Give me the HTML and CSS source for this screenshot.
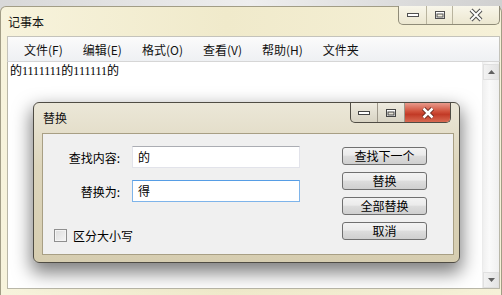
FILE: index.html
```html
<!DOCTYPE html>
<html lang="zh-CN">
<head>
    <meta charset="UTF-8">
    <title>记事本</title>
    <link rel="stylesheet" href="styles.css">
</head>
<body>

    <div class="notepad">
        <div class="title-bar">
            <span class="title">记事本</span>
            <div class="controls">
                <span class="ctl ctl-min">
                    <svg width="14" height="6" viewBox="0 0 14 6"><rect x="1.5" y="1.5" width="11" height="3" fill="#fff" stroke="#505050"/></svg>
                </span>
                <span class="ctl ctl-max">
                    <svg width="12" height="10" viewBox="0 0 12 10"><rect x="1.5" y="1.5" width="9" height="7" fill="#fff" stroke="#505050"/><rect x="3" y="4" width="6" height="3" fill="#f4f1e0" stroke="#505050"/></svg>
                </span>
                <span class="ctl ctl-close">
                    <svg width="16" height="14" viewBox="0 0 16 14"><path d="M3 2 L13 12 M13 2 L3 12" stroke="#505050" stroke-width="4"/><path d="M3 2 L13 12 M13 2 L3 12" stroke="#fff" stroke-width="2"/></svg>
                </span>
            </div>
        </div>

        <div class="menu-bar">
            <span class="menu-item">文件(F)</span>
            <span class="menu-item">编辑(E)</span>
            <span class="menu-item">格式(O)</span>
            <span class="menu-item">查看(V)</span>
            <span class="menu-item">帮助(H)</span>
            <span class="menu-item">文件夹</span>
        </div>

        <div class="editor">
            <div class="text">的1111111的111111的</div>
            <div class="scrollbar">
                <span class="arrow">
                    <svg width="7" height="4" viewBox="0 0 7 4"><path d="M0 4 L3.5 0 L7 4 Z" fill="#606060"/></svg>
                </span>
                <span class="track"></span>
                <span class="arrow">
                    <svg width="7" height="4" viewBox="0 0 7 4"><path d="M0 0 L7 0 L3.5 4 Z" fill="#606060"/></svg>
                </span>
            </div>
        </div>
    </div>

    <!-- replace dialog sits over the notepad window -->
    <div class="dialog">
        <div class="dlg-title-bar">
            <span class="title">替换</span>
            <div class="dlg-controls">
                <span class="ctl dlg-min">
                    <svg width="14" height="6" viewBox="0 0 14 6"><rect x="1.5" y="1.5" width="11" height="3" fill="#fff" stroke="#444"/></svg>
                </span>
                <span class="ctl dlg-max">
                    <svg width="12" height="10" viewBox="0 0 12 10"><rect x="1.5" y="1.5" width="9" height="7" fill="#fff" stroke="#444"/><rect x="3" y="4" width="6" height="3" fill="#e4e0d4" stroke="#444"/></svg>
                </span>
                <span class="ctl dlg-close">
                    <svg width="16" height="14" viewBox="0 0 16 14"><path d="M3.5 2.5 L12.5 11.5 M12.5 2.5 L3.5 11.5" stroke="#6a2a20" stroke-width="4.5"/><path d="M3.5 2.5 L12.5 11.5 M12.5 2.5 L3.5 11.5" stroke="#fff" stroke-width="2.5"/></svg>
                </span>
            </div>
        </div>

        <div class="dlg-body">
            <div class="form">
                <div class="row">
                    <label class="label">查找内容:</label>
                    <div class="input">的</div>
                </div>
                <div class="row">
                    <label class="label">替换为:</label>
                    <div class="input focused">得</div>
                </div>
                <div class="check-row">
                    <span class="checkbox"></span>
                    <span>区分大小写</span>
                </div>
            </div>
            <div class="buttons">
                <span class="btn">查找下一个</span>
                <span class="btn">替换</span>
                <span class="btn">全部替换</span>
                <span class="btn">取消</span>
            </div>
        </div>
    </div>

</body>
</html>
```

FILE: styles.css
```css
* {
    margin: 0;
    padding: 0;
    box-sizing: border-box;
}

body {
    width: 502px;
    height: 295px;
    overflow: hidden;
    position: relative;
    background: linear-gradient(90deg, #d8d8d8, #eeeeee 50%, #d0d0d0);
    font-family: "Noto Sans CJK SC", sans-serif;
    font-size: 12px;
    color: #000;
}

/* notepad window */
.notepad {
    margin-top: 6px;
    height: 289px;
    display: flex;
    flex-direction: column;
    padding: 0 1px 6px 6px;
    background: linear-gradient(90deg, #f7f3dc, #f0eacb 45%, #f6f1d8);
    border: 1px solid #a29d86;
    border-bottom: none;
    border-radius: 6px 6px 0 0;
}

.title-bar {
    height: 29px;
    display: flex;
    justify-content: space-between;
    align-items: flex-start;
}

.title {
    padding-left: 1px;
    line-height: 29px;
    color: #111;
}

.controls {
    display: flex;
    height: 19px;
    margin-top: -1px;
    border: 1px solid #8f8b78;
    border-top: none;
    border-radius: 0 0 5px 5px;
    background: linear-gradient(#f8f6ea, #ece7d0);
    overflow: hidden;
}

.ctl {
    display: flex;
    align-items: center;
    justify-content: center;
}

.ctl-min {
    width: 28px;
    border-right: 1px solid #b9b49e;
}

.ctl-max {
    width: 26px;
    border-right: 1px solid #b9b49e;
}

.ctl-close {
    width: 46px;
}

.menu-bar {
    height: 26px;
    display: flex;
    align-items: center;
    padding-left: 6px;
    background: linear-gradient(#fbfbfb, #eef0f3);
    border: 1px solid #c4c3bb;
    border-bottom: 1px solid #d6d6d6;
}

.menu-item {
    padding: 0 10px;
    color: #111;
}

.editor {
    flex: 1;
    display: flex;
    background: #fff;
    border: 1px solid #b9b7a8;
    border-top: none;
}

.text {
    flex: 1;
    padding: 1px 2px;
    line-height: 16px;
    font-family: "Liberation Serif", "Noto Sans CJK SC", serif;
    font-size: 12px;
}

.scrollbar {
    width: 17px;
    display: flex;
    flex-direction: column;
    padding-top: 2px;
    background: linear-gradient(90deg, #f0f0f0, #fafafa 40%, #f0f0f0);
    border-left: 1px solid #ececec;
}

.arrow {
    height: 16px;
    display: flex;
    align-items: center;
    justify-content: center;
    background: linear-gradient(90deg, #f2f2f2, #e4e4e4);
    border: 1px solid #e0e0e0;
}

.track {
    flex: 1;
}

/* replace dialog */
.dialog {
    position: absolute;
    left: 33px;
    top: 102px;
    width: 427px;
    height: 161px;
    display: flex;
    flex-direction: column;
    padding: 0 5px 7px 8px;
    background: linear-gradient(#ebe7d8, #ddd5bb 40%, #d6cdb0);
    border: 1px solid #4f4c44;
    border-radius: 6px;
    box-shadow: 0 8px 18px 2px rgba(0, 0, 0, 0.5);
}

.dlg-title-bar {
    height: 30px;
    display: flex;
    justify-content: space-between;
    align-items: flex-start;
}

.dlg-controls {
    display: flex;
    height: 20px;
    margin-right: 3px;
    border: 1px solid #4f4c44;
    border-top: none;
    border-radius: 0 0 5px 5px;
    overflow: hidden;
    background: linear-gradient(#eeebe0, #d8d3c3);
}

.dlg-min {
    width: 27px;
    border-right: 1px solid #9d978a;
}

.dlg-max {
    width: 27px;
    border-right: 1px solid #9d978a;
}

.dlg-close {
    width: 45px;
    background: linear-gradient(#e89a8c, #d0503a 45%, #c23a26 60%, #d86a52);
}

.dlg-body {
    flex: 1;
    display: flex;
    gap: 42px;
    background: #f0f0f0;
    border: 1px solid #a89f84;
}

.form {
    display: flex;
    flex-direction: column;
    gap: 12px;
    padding-top: 12px;
}

.row {
    display: flex;
    align-items: center;
    gap: 12px;
}

.label {
    width: 77px;
    text-align: right;
}

.input {
    width: 168px;
    height: 22px;
    padding-left: 5px;
    line-height: 20px;
    background: #fff;
    border: 1px solid #e2e3ea;
    border-top-color: #abadb3;
}

.input.focused {
    border-color: #7eb4ea;
    border-top-color: #569de5;
}

.check-row {
    display: flex;
    align-items: center;
    gap: 6px;
    margin-top: 13px;
    padding-left: 11px;
}

.checkbox {
    width: 13px;
    height: 13px;
    border: 1px solid #8f8f8f;
    background: linear-gradient(135deg, #dcdcdc, #f6f6f6);
    box-shadow: inset 0 0 0 1px #f4f4f4;
}

.buttons {
    display: flex;
    flex-direction: column;
    gap: 7px;
    padding-top: 13px;
}

.btn {
    width: 85px;
    height: 18px;
    line-height: 16px;
    text-align: center;
    background: linear-gradient(#f3f3f3, #ebebeb 45%, #dddddd 50%, #cfcfcf);
    border: 1px solid #707070;
    border-radius: 3px;
}
```
